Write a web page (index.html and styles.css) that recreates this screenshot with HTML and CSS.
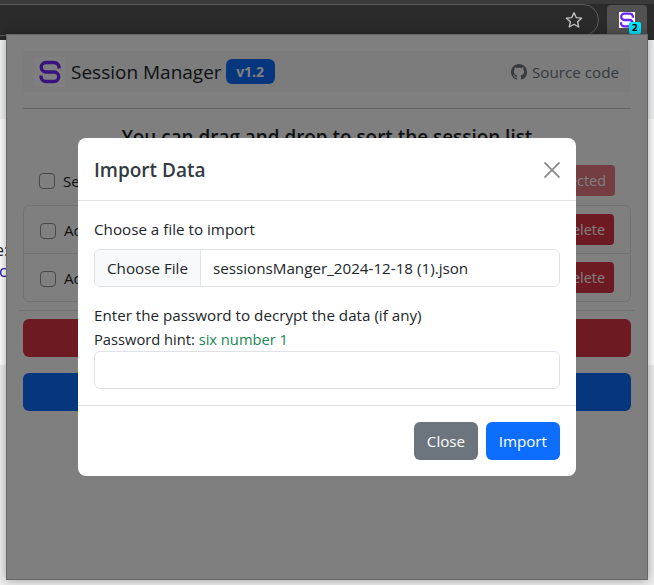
FILE: index.html
```html
<!DOCTYPE html>
<html lang="en">

<head>
    <meta charset="UTF-8">
    <meta name="viewport" content="width=device-width, initial-scale=1.0">
    <title>Session Manager</title>
    <link rel="stylesheet" href="styles.css">
</head>

<body>
    <div class="toolbar">
        <div class="address-bar">
            <svg class="star" viewBox="0 0 24 24" width="20" height="20">
                <path d="M12 3.2l2.7 5.9 6.4.7-4.8 4.3 1.4 6.3L12 17.1l-5.7 3.3 1.4-6.3-4.8-4.3 6.4-.7z" fill="none" stroke="#c4c4c4" stroke-width="1.6" stroke-linejoin="round"/>
            </svg>
        </div>
        <div class="ext-button">
            <div class="ext-icon">
                <svg viewBox="0 0 24 24" width="16" height="16">
                    <path d="M21 8.5V7.5A5 5 0 0 0 16 2.5H8A4.75 4.75 0 0 0 8 12H16A4.75 4.75 0 0 1 16 21.5H8A5 5 0 0 1 3 16.5V15.5" fill="none" stroke="#6a24f0" stroke-width="3.4"/>
                </svg>
                <span class="ext-badge">2</span>
            </div>
        </div>
    </div>

    <div class="behind-page">
        <div class="behind-band"></div>
        <span class="behind-text behind-one">e:</span>
        <span class="behind-text behind-two">c</span>
    </div>

    <div class="popup">
        <header class="popup-header">
            <div class="brand">
                <div class="logo">
                    <svg viewBox="0 0 24 24" width="24" height="24">
                        <path d="M21 8.5V7.5A5 5 0 0 0 16 2.5H8A4.75 4.75 0 0 0 8 12H16A4.75 4.75 0 0 1 16 21.5H8A5 5 0 0 1 3 16.5V15.5" fill="none" stroke="#7424ff" stroke-width="3.4"/>
                    </svg>
                </div>
                <span class="brand-name">Session Manager</span>
                <span class="version">v1.2</span>
            </div>
            <a class="source-link" href="#">
                <svg viewBox="0 0 16 16" width="16" height="16">
                    <path fill="#6c757d" d="M8 0C3.58 0 0 3.58 0 8c0 3.54 2.29 6.53 5.47 7.59.4.07.55-.17.55-.38 0-.19-.01-.82-.01-1.49-2.01.37-2.53-.49-2.69-.94-.09-.23-.48-.94-.82-1.13-.28-.15-.68-.52-.01-.53.63-.01 1.08.58 1.23.82.72 1.21 1.87.87 2.33.66.07-.52.28-.87.51-1.07-1.78-.2-3.64-.89-3.64-3.95 0-.87.31-1.59.82-2.15-.08-.2-.36-1.02.08-2.12 0 0 .67-.21 2.2.82.64-.18 1.32-.27 2-.27s1.36.09 2 .27c1.53-1.04 2.2-.82 2.2-.82.44 1.1.16 1.92.08 2.12.51.56.82 1.27.82 2.15 0 3.07-1.87 3.75-3.65 3.95.29.25.54.73.54 1.48 0 1.07-.01 1.93-.01 2.2 0 .21.15.46.55.38A8.01 8.01 0 0 0 16 8c0-4.42-3.58-8-8-8z"/>
                </svg>
                Source code
            </a>
        </header>
        <hr class="rule">
        <h2 class="popup-title">You can drag and drop to sort the session list</h2>

        <div class="select-row">
            <label class="check-label"><span class="checkbox"></span>Se</label>
            <button class="btn btn-faded">Delete selected</button>
        </div>

        <ul class="session-list">
            <li class="session-item">
                <label class="check-label"><span class="checkbox"></span>Ac</label>
                <button class="btn btn-danger">Delete</button>
            </li>
            <li class="session-item">
                <label class="check-label"><span class="checkbox"></span>Ac</label>
                <button class="btn btn-danger">Delete</button>
            </li>
        </ul>
        <hr class="rule rule-wide">

        <div class="btn-large btn-danger"></div>
        <div class="btn-large btn-primary"></div>
    </div>

    <div class="backdrop"></div>

    <div class="modal">
        <div class="modal-header">
            <h5 class="modal-title">Import Data</h5>
            <svg class="modal-close" viewBox="0 0 16 16" width="16" height="16">
                <path d="M.5.5l15 15M15.5.5l-15 15" stroke="#8a8a8a" stroke-width="1.8" fill="none"/>
            </svg>
        </div>
        <div class="modal-body">
            <p class="field-label">Choose a file to import</p>
            <div class="file-input">
                <span class="file-button">Choose File</span>
                <span class="file-name">sessionsManger_2024-12-18 (1).json</span>
            </div>
            <p class="field-label field-label-gap">Enter the password to decrypt the data (if any)</p>
            <p class="field-label field-label-hint">Password hint: <span class="hint">six number 1</span></p>
            <input class="text-input" type="password">
        </div>
        <div class="modal-footer">
            <button class="btn-modal btn-secondary">Close</button>
            <button class="btn-modal btn-import">Import</button>
        </div>
    </div>
</body>

</html>
```

FILE: styles.css
```css
* {
    box-sizing: border-box;
}

body {
    margin: 0;
    width: 654px;
    height: 585px;
    overflow: hidden;
    position: relative;
    background-color: #eeeeee;
    font-family: "Open Sans", "Noto Sans", sans-serif;
    font-size: 15.2px;
    color: #212529;
}

/* browser chrome */
.toolbar {
    height: 40px;
    background-color: #2b2b2b;
    border-top: 4px solid #3a3a3a;
    position: relative;
    display: flex;
    justify-content: flex-end;
    padding-right: 7px;
}

.address-bar {
    position: absolute;
    left: -20px;
    right: 55px;
    top: 0;
    height: 32px;
    border: 1px solid #5c5c5c;
    border-radius: 17px;
    display: flex;
    align-items: center;
    justify-content: flex-end;
    padding-right: 14px;
}

.ext-button {
    width: 40px;
    height: 32px;
    margin-top: 1px;
    background-color: #525252;
    border-radius: 4px 4px 0 0;
    display: flex;
    justify-content: center;
    padding-top: 7px;
}

.ext-icon {
    width: 16px;
    height: 16px;
    background-color: #fff;
    position: relative;
}

.ext-badge {
    position: absolute;
    left: 10px;
    top: 10px;
    width: 12px;
    height: 12px;
    border-radius: 2px;
    background-color: #00e5ff;
    color: #000;
    font-family: "DejaVu Sans", sans-serif;
    font-size: 9px;
    font-weight: 700;
    line-height: 12px;
    text-align: center;
}

.behind-page {
    height: 325px;
    background-color: #ffffff;
    position: relative;
}

.behind-band {
    height: 79px;
    background-color: #f1f3f4;
}

.behind-text {
    position: absolute;
    font-size: 16px;
}

.behind-one {
    left: -5px;
    top: 199px;
}

.behind-two {
    left: -1px;
    top: 220px;
    color: #1a0dab;
}

/* extension popup */
.popup {
    position: absolute;
    left: 6px;
    top: 34px;
    width: 642px;
    height: 546px;
    padding: 16px 16px 0;
    background-color: #ffffff;
    border: 1px solid #666;
    box-shadow: 0 0 10px rgba(0, 0, 0, 0.35);
}

.popup-header {
    height: 41px;
    padding: 0 12px;
    background-color: #f8f9fa;
    display: flex;
    align-items: center;
    justify-content: space-between;
}

.brand {
    display: flex;
    align-items: center;
}

.logo {
    width: 30px;
    height: 30px;
    background-color: #fff;
    display: flex;
    align-items: center;
    justify-content: center;
}

.brand-name {
    margin-left: 6px;
    font-size: 19px;
}

.version {
    margin-left: 4px;
    width: 49px;
    height: 25px;
    background-color: #0d6efd;
    color: #fff;
    border-radius: 6px;
    font-size: 14px;
    font-weight: 700;
    line-height: 25px;
    text-align: center;
}

.source-link {
    color: #6c757d;
    text-decoration: none;
    display: flex;
    align-items: center;
    gap: 5px;
}

.rule {
    margin: 16px 0 0;
    border: 0;
    border-top: 1px solid #c6c7c8;
}

.popup-title {
    margin: 14px 0 0;
    font-size: 18.9px;
    font-weight: 600;
    line-height: 28px;
    text-align: center;
}

.select-row {
    margin-top: 14px;
    height: 31px;
    padding: 0 16px;
    display: flex;
    align-items: center;
    justify-content: space-between;
}

.check-label {
    display: flex;
    align-items: center;
    gap: 8px;
}

.checkbox {
    width: 16px;
    height: 16px;
    border: 1px solid #8f8f8f;
    border-radius: 4px;
    background-color: #fff;
}

.session-item .checkbox {
    margin-top: 2px;
}

.btn {
    height: 31px;
    padding: 0 9px;
    border: none;
    border-radius: 4px;
    color: #fff;
    font-family: inherit;
    font-size: 14.4px;
}

.btn-faded {
    background-color: #dc3545;
    opacity: 0.65;
}

.btn-danger {
    background-color: #dc3545;
}

.btn-primary {
    background-color: #0d6efd;
}

.session-list {
    list-style: none;
    margin: 9px 0 0;
    padding: 0;
    border: 1px solid #dee2e6;
    border-radius: 6px;
}

.session-item {
    height: 47px;
    padding: 0 16px;
    display: flex;
    align-items: center;
    justify-content: space-between;
}

.session-item + .session-item {
    height: 48px;
    border-top: 1px solid #dee2e6;
}

.rule-wide {
    margin: 8px -4px 0;
    border-top-color: #dee2e6;
}

.btn-large {
    height: 38px;
    margin-top: 16px;
    border-radius: 6px;
}

.rule-wide + .btn-large {
    margin-top: 8px;
}

.backdrop {
    position: absolute;
    left: 7px;
    top: 35px;
    width: 640px;
    height: 544px;
    background-color: rgba(0, 0, 0, 0.5);
}

/* import dialog */
.modal {
    position: absolute;
    left: 78px;
    top: 138px;
    width: 498px;
    height: 338px;
    background-color: #fff;
    border-radius: 8px;
    overflow: hidden;
}

.modal-header {
    height: 63px;
    padding: 2px 16px 0;
    border-bottom: 1px solid #dee2e6;
    display: flex;
    align-items: center;
    justify-content: space-between;
}

.modal-title {
    margin: 0;
    font-size: 19px;
    font-weight: 600;
    color: #343a40;
}

.modal-body {
    padding: 16px;
    height: 205px;
    border-bottom: 1px solid #dee2e6;
}

.field-label {
    margin: 0;
    padding-top: 1px;
    line-height: 23px;
}

.field-label-gap {
    margin-top: 16px;
}

.field-label-hint {
    font-size: 14.7px;
}

.hint {
    color: #198754;
}

.file-input {
    margin-top: 8px;
    height: 38px;
    display: flex;
    border: 1px solid #dee2e6;
    border-radius: 6px;
    overflow: hidden;
}

.file-button {
    width: 106px;
    background-color: #f8f9fa;
    border-right: 1px solid #dee2e6;
    display: flex;
    align-items: center;
    justify-content: center;
}

.file-name {
    padding-left: 12px;
    display: flex;
    align-items: center;
}

.text-input {
    display: block;
    width: 100%;
    height: 38px;
    border: 1px solid #dee2e6;
    border-radius: 6px;
}

.modal-footer {
    padding: 16px;
    display: flex;
    justify-content: flex-end;
    gap: 8px;
}

.btn-modal {
    height: 38px;
    padding: 0 13px;
    border: none;
    border-radius: 6px;
    color: #fff;
    font-family: inherit;
    font-size: 15.2px;
}

.btn-secondary {
    padding: 0 12.5px;
    background-color: #6c757d;
}

.btn-import {
    background-color: #0d6efd;
}
```
